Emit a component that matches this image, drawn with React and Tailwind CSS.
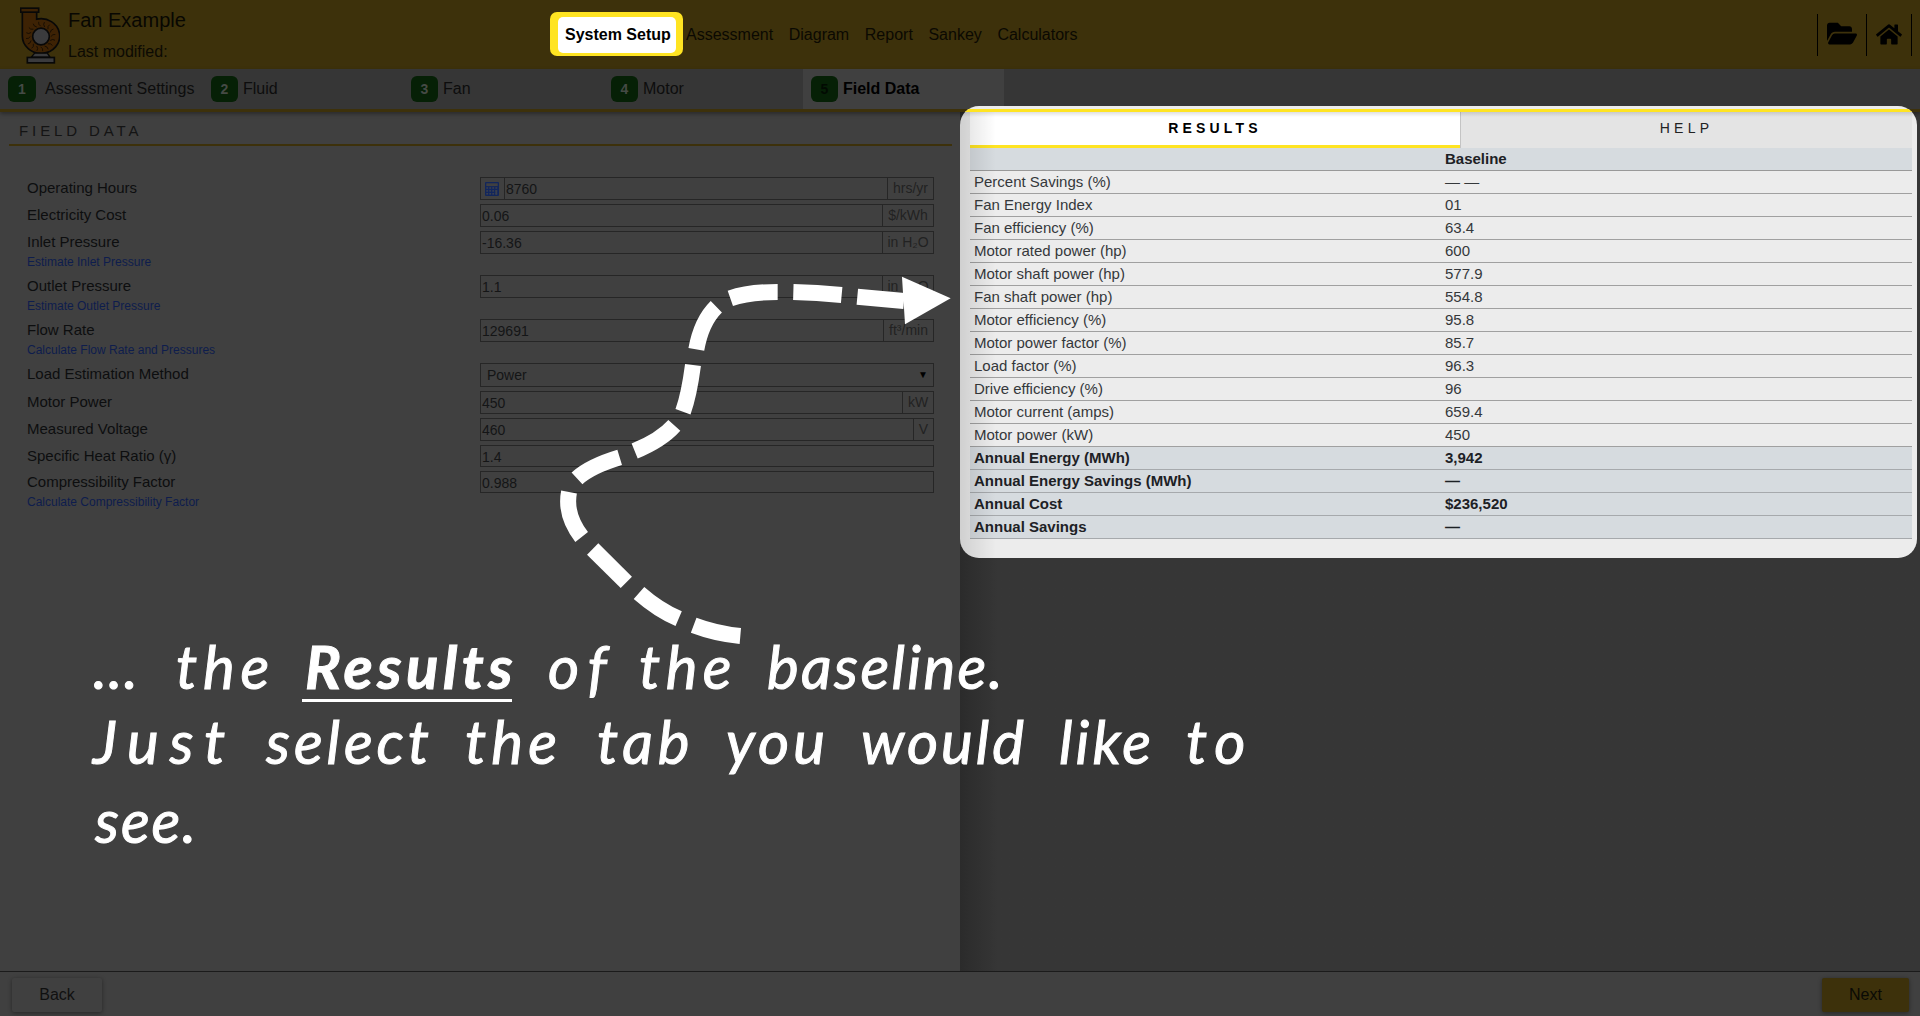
import React, { useLayoutEffect, useRef, useState } from "react";
import { FaFolderOpen, FaHome } from "react-icons/fa";

function FanLogo() {
  const blades = Array.from({ length: 16 }, (_, i) => i * 22.5);
  return (
    <svg viewBox="0 0 120 170" className="h-[57px] w-10">
      <path d="M7 14V86A56 52 0 1 0 50 36V14Z" fill="#3d2204" stroke="#080808" strokeWidth="5" />
      <rect x="2" y="3" width="54" height="12" fill="#3d2204" stroke="#080808" strokeWidth="5" />
      <g fill="none" stroke="#120b03" strokeWidth="2.5">
        {blades.map((a) => (
          <path key={a} d="M62 57q-8-5-6-13" transform={`rotate(${a} 62 88)`} />
        ))}
      </g>
      <circle cx="63" cy="88" r="25" fill="#3b3b3d" stroke="#080808" strokeWidth="5" />
      <path d="M44 138H82L90 150H34Z" fill="#3b3b3d" stroke="#080808" strokeWidth="4" />
      <rect x="22" y="151" width="81" height="16" fill="#3b3b3d" stroke="#080808" strokeWidth="5" />
    </svg>
  );
}

function CalcIcon() {
  return (
    <svg viewBox="0 0 14 14" className="mr-px h-[14px] w-[14px]">
      <rect width="14" height="14" rx="1" fill="#12265c" />
      <rect x="1.3" y="1.3" width="11.4" height="2.8" fill="#404040" />
      <g fill="#3a3f4d">
        {[5.2, 8.1, 11].map((y) =>
          [1.3, 4.3, 7.3, 10.4].map((x) => <rect key={`${x}-${y}`} x={x} y={y} width="1.8" height="1.6" />)
        )}
      </g>
      <rect x="10.4" y="8.1" width="1.8" height="4.5" fill="#3a3f4d" />
    </svg>
  );
}

const steps = [
  { n: 1, label: "Assessment Settings", box: "w-[203px] pl-2", badge: "w-7 mr-[9px]" },
  { n: 2, label: "Fluid", box: "w-[200px] pl-2", badge: "w-[27px] mr-[5px]" },
  { n: 3, label: "Fan", box: "w-[200px] pl-2", badge: "w-[27px] mr-[5px]" },
  { n: 4, label: "Motor", box: "w-[200px] pl-2", badge: "w-[27px] mr-[5px]" },
  { n: 5, label: "Field Data", box: "w-[201px] pl-2 bg-[#404040] font-bold text-black", badge: "w-[27px] mr-[5px]", active: true },
];

const fields = [
  { label: "Operating Hours", value: "8760", unit: "hrs/yr", uw: "w-[46px]", row: "h-[27px]", box: "h-[23px]", calc: true },
  { label: "Electricity Cost", value: "0.06", unit: "$/kWh", uw: "w-[51px]", row: "h-[27px]", box: "h-[23px]" },
  { label: "Inlet Pressure", value: "-16.36", unit: "in H₂O", uw: "w-[51px]", row: "h-[44px]", box: "h-[23px]", link: "Estimate Inlet Pressure" },
  { label: "Outlet Pressure", value: "1.1", unit: "in H₂O", uw: "w-[51px]", row: "h-[44px]", box: "h-[23px]", link: "Estimate Outlet Pressure" },
  { label: "Flow Rate", value: "129691", unit: "ft³/min", uw: "w-[50px]", row: "h-[44px]", box: "h-[23px]", link: "Calculate Flow Rate and Pressures" },
  { label: "Load Estimation Method", value: "Power", row: "h-[28px]", box: "h-[24px]", select: true },
  { label: "Motor Power", value: "450", unit: "kW", uw: "w-[31px]", row: "h-[27px]", box: "h-[23px]" },
  { label: "Measured Voltage", value: "460", unit: "V", uw: "w-[20px]", row: "h-[27px]", box: "h-[23px]" },
  { label: "Specific Heat Ratio (γ)", value: "1.4", row: "h-[26px]", box: "h-[22px]" },
  { label: "Compressibility Factor", value: "0.988", row: "h-[44px]", box: "h-[22px]", link: "Calculate Compressibility Factor" },
];

const results = [
  ["Percent Savings (%)", "— —"],
  ["Fan Energy Index", "01"],
  ["Fan efficiency (%)", "63.4"],
  ["Motor rated power (hp)", "600"],
  ["Motor shaft power (hp)", "577.9"],
  ["Fan shaft power (hp)", "554.8"],
  ["Motor efficiency (%)", "95.8"],
  ["Motor power factor (%)", "85.7"],
  ["Load factor (%)", "96.3"],
  ["Drive efficiency (%)", "96"],
  ["Motor current (amps)", "659.4"],
  ["Motor power (kW)", "450"],
  ["Annual Energy (MWh)", "3,942", true],
  ["Annual Energy Savings (MWh)", "—", true],
  ["Annual Cost", "$236,520", true],
  ["Annual Savings", "—", true],
];

function Field({ f }) {
  return (
    <div className={`flex ${f.row}`}>
      <div className="w-[453px]">
        <div className="h-6 text-[15px] leading-[22px] text-[#0d0e0f]">{f.label}</div>
        {f.link && <div className="text-xs leading-[15px] text-[#0e1d4d]">{f.link}</div>}
      </div>
      <div className={`flex w-[454px] border border-[#262626] text-sm leading-[22px] text-[#141516] ${f.box}`}>
        {f.calc && (
          <div className="flex w-6 items-center justify-center border-r border-[#262626]">
            <CalcIcon />
          </div>
        )}
        <div className={f.select ? "flex-1 pl-1.5" : "flex-1 pl-px"}>{f.value}</div>
        {f.select && <div className="pr-[5px] text-[10px] text-black">▼</div>}
        {f.unit && (
          <div className={`border-l border-[#262626] text-center leading-5 whitespace-nowrap text-[#222] ${f.uw}`}>{f.unit}</div>
        )}
      </div>
    </div>
  );
}

// Spreads a word's letters so that it fills the given width.
function Word({ children, width, gap, className = "" }) {
  const ref = useRef(null);
  const [spacing, setSpacing] = useState(0);
  useLayoutEffect(() => {
    const natural = ref.current.getBoundingClientRect().width;
    setSpacing((width - natural) / children.length);
  }, []);
  return (
    <span className="shrink-0" style={{ width, marginRight: gap }}>
      <span ref={ref} className={`inline-block whitespace-nowrap ${className}`} style={{ letterSpacing: spacing }}>
        {children}
      </span>
    </span>
  );
}

function Annotation() {
  return (
    <div className="absolute top-[629px] left-[93px] font-['Lato','Open_Sans',sans-serif] text-[60px] leading-[75px] text-white italic [-webkit-text-stroke:1px_white]">
      <div className="flex h-[75px]">
        <Word width={46} gap={37}>...</Word>
        <Word width={99} gap={30}>the</Word>
        <span className="relative flex">
          <Word width={212} gap={31} className="font-bold">Results</Word>
          <span className="absolute top-[70px] left-[-3px] h-[3px] w-[210px] bg-white" />
        </span>
        <Word width={68} gap={23}>of</Word>
        <Word width={98} gap={30}>the</Word>
        <Word width={238} gap={0}>baseline.</Word>
      </div>
      <div className="flex h-[79px]">
        <Word width={143} gap={30}>Just</Word>
        <Word width={167} gap={32}>select</Word>
        <Word width={97} gap={35}>the</Word>
        <Word width={97} gap={32}>tab</Word>
        <Word width={103} gap={32}>you</Word>
        <Word width={166} gap={32}>would</Word>
        <Word width={95} gap={32}>like</Word>
        <Word width={67} gap={0}>to</Word>
      </div>
      <div className="flex pl-[2px]">
        <Word width={103} gap={0}>see.</Word>
      </div>
    </div>
  );
}

function Arrow() {
  return (
    <svg viewBox="0 0 1260 1170" className="absolute top-[270px] left-[540px] h-[390px] w-[420px]">
      <g fill="none" stroke="#fff" strokeWidth="48">
        <path d="M601 1098Q530 1092 461 1066" />
        <path d="M416 1046Q355 1020 297 969" />
        <path d="M259 937L158 837" />
        <path d="M125 801Q74 735 87 666" />
        <path d="M111 625Q150 589 239 562" />
        <path d="M284 543Q364 510 403 466" />
        <path d="M429 425Q447 376 459 285" />
        <path d="M469 238Q484 154 529 110" />
        <path d="M571 85Q625 66 713 66" />
        <path d="M760 66Q830 68 905 75" />
        <path d="M952 80L1092 93" />
      </g>
      <path d="M1086 20L1232 85L1095 163Z" fill="#fff" />
    </svg>
  );
}

function ResultsPanel() {
  return (
    <div className="absolute top-[106px] left-[960px] z-20 h-[452px] w-[957px] overflow-hidden rounded-[19px] bg-[#ececec] pt-[3px]">
      <div className="h-[3px] bg-[#ffe422]" />
      <div className="mr-[5px] ml-[10px]">
        <div className="flex h-9 text-sm tracking-[4.2px]">
          <div className="w-[490px] border-b-3 border-[#ffe422] bg-white text-center leading-[33px] font-bold text-black">RESULTS</div>
          <div className="flex-1 border-l border-[#c4c4c4] bg-[#e4e4e4] text-center leading-[33px] text-[#222]">HELP</div>
        </div>
        <div className="text-[15px] text-[#35383b]">
          <div className="flex h-[23px] border-b border-[#999] bg-[#d6dbdf] leading-[21px] font-bold text-[#1d2125]">
            <div className="w-[475px]" />
            <div>Baseline</div>
          </div>
          {results.map(([name, value, total]) => (
            <div
              key={name}
              className={
                total
                  ? "flex h-[23px] border-b border-[#a6a9ac] bg-[#d6dbdf] leading-[22px] font-bold text-[#1d2125]"
                  : "flex h-[23px] border-b border-[#a0a0a0] leading-[22px]"
              }
            >
              <div className="w-[475px] pl-1">{name}</div>
              <div>{value}</div>
            </div>
          ))}
        </div>
      </div>
      <div className="absolute top-[6px] left-0 h-[446px] w-9 bg-linear-to-r from-black/12 to-transparent" />
      <div className="absolute top-[6px] left-0 h-[5px] w-full bg-linear-to-b from-black/12 to-transparent" />
    </div>
  );
}

export default function App() {
  return (
    <div className="relative flex h-[1016px] w-[1920px] flex-col overflow-hidden bg-[#404040] font-['Liberation_Sans',Arial,sans-serif] text-base text-[#0b0b0b]">
      <header className="flex h-[69px] shrink-0 bg-[#3d310b] text-black">
        <div className="flex w-[550px] pt-[7px] pl-5">
          <FanLogo />
          <div className="pl-2">
            <div className="h-8 text-xl leading-[26px] text-[#080702]">Fan Example</div>
            <div className="leading-[26px] text-[#0c0a03]">Last modified:</div>
          </div>
        </div>
        <nav className="flex flex-1 pt-3 leading-[45px] text-[#0b0902]">
          <div className="mr-[3px] h-11 w-[133px] rounded-[7px] bg-[#ffe422] pt-[5px] pl-2">
            <div className="h-9 w-[118px] rounded-[5px] bg-white pl-[7px] leading-[35px] font-bold whitespace-nowrap text-black">System Setup</div>
          </div>
          <div className="flex gap-[15.6px]">
            <span>Assessment</span>
            <span>Diagram</span>
            <span>Report</span>
            <span>Sankey</span>
            <span>Calculators</span>
          </div>
        </nav>
        <div className="mt-[14px] mr-2 flex h-[42px] w-[95px] border-x border-black">
          <div className="flex w-[49px] items-center justify-center border-r border-black">
            <FaFolderOpen preserveAspectRatio="none" className="mb-[4px] h-[29px] w-[30px]" />
          </div>
          <div className="flex flex-1 items-center justify-center">
            <FaHome className="mb-[2px] h-[23px] w-[26px]" />
          </div>
        </div>
      </header>

      <div className="z-10 flex h-[43px] shrink-0 border-b-3 border-[#3d310b] bg-[#363636] text-[#0d0d0d] shadow-[0_2px_4px_rgba(0,0,0,0.35)]">
        {steps.map((s) => (
          <div key={s.n} className={`flex h-10 items-center ${s.box}`}>
            <span
              className={
                s.active
                  ? `flex h-[26px] items-center justify-center rounded-md bg-[#062006] text-sm font-bold text-[#020a02] ${s.badge}`
                  : `flex h-[26px] items-center justify-center rounded-md bg-[#062006] text-sm font-bold text-[#454a45] ${s.badge}`
              }
            >
              {s.n}
            </span>
            <span className="mb-px whitespace-nowrap">{s.label}</span>
          </div>
        ))}
      </div>

      <main className="flex h-[859px] shrink-0">
        <section className="w-[960px]">
          <div className="mr-2 ml-[9px] h-[34px] border-b-2 border-[#3d310b] pl-[10px] text-[15px] leading-[37px] tracking-[3.9px] text-[#141414]">FIELD DATA</div>
          <div className="pt-[31px] pl-[27px]">
            {fields.map((f) => (
              <Field key={f.label} f={f} />
            ))}
          </div>
        </section>
        <section className="flex-1 bg-[#363636] bg-linear-to-r from-[#2b2b2b] to-[#363636] to-[38px]" />
      </main>

      <footer className="flex h-[45px] shrink-0 justify-between border-t border-[#1b1b1b] pt-[6px] pr-[11px] pl-3">
        <button className="h-[34px] w-[90px] rounded-xs bg-[#404040] text-[#101010] shadow-[0_1px_4px_rgba(0,0,0,0.4)]">Back</button>
        <button className="h-[34px] w-[87px] rounded-xs bg-[#3d310b] text-[#0a0a05] shadow-[0_1px_4px_rgba(0,0,0,0.4)]">Next</button>
      </footer>

      <ResultsPanel />
      <Annotation />
      <Arrow />
    </div>
  );
}
